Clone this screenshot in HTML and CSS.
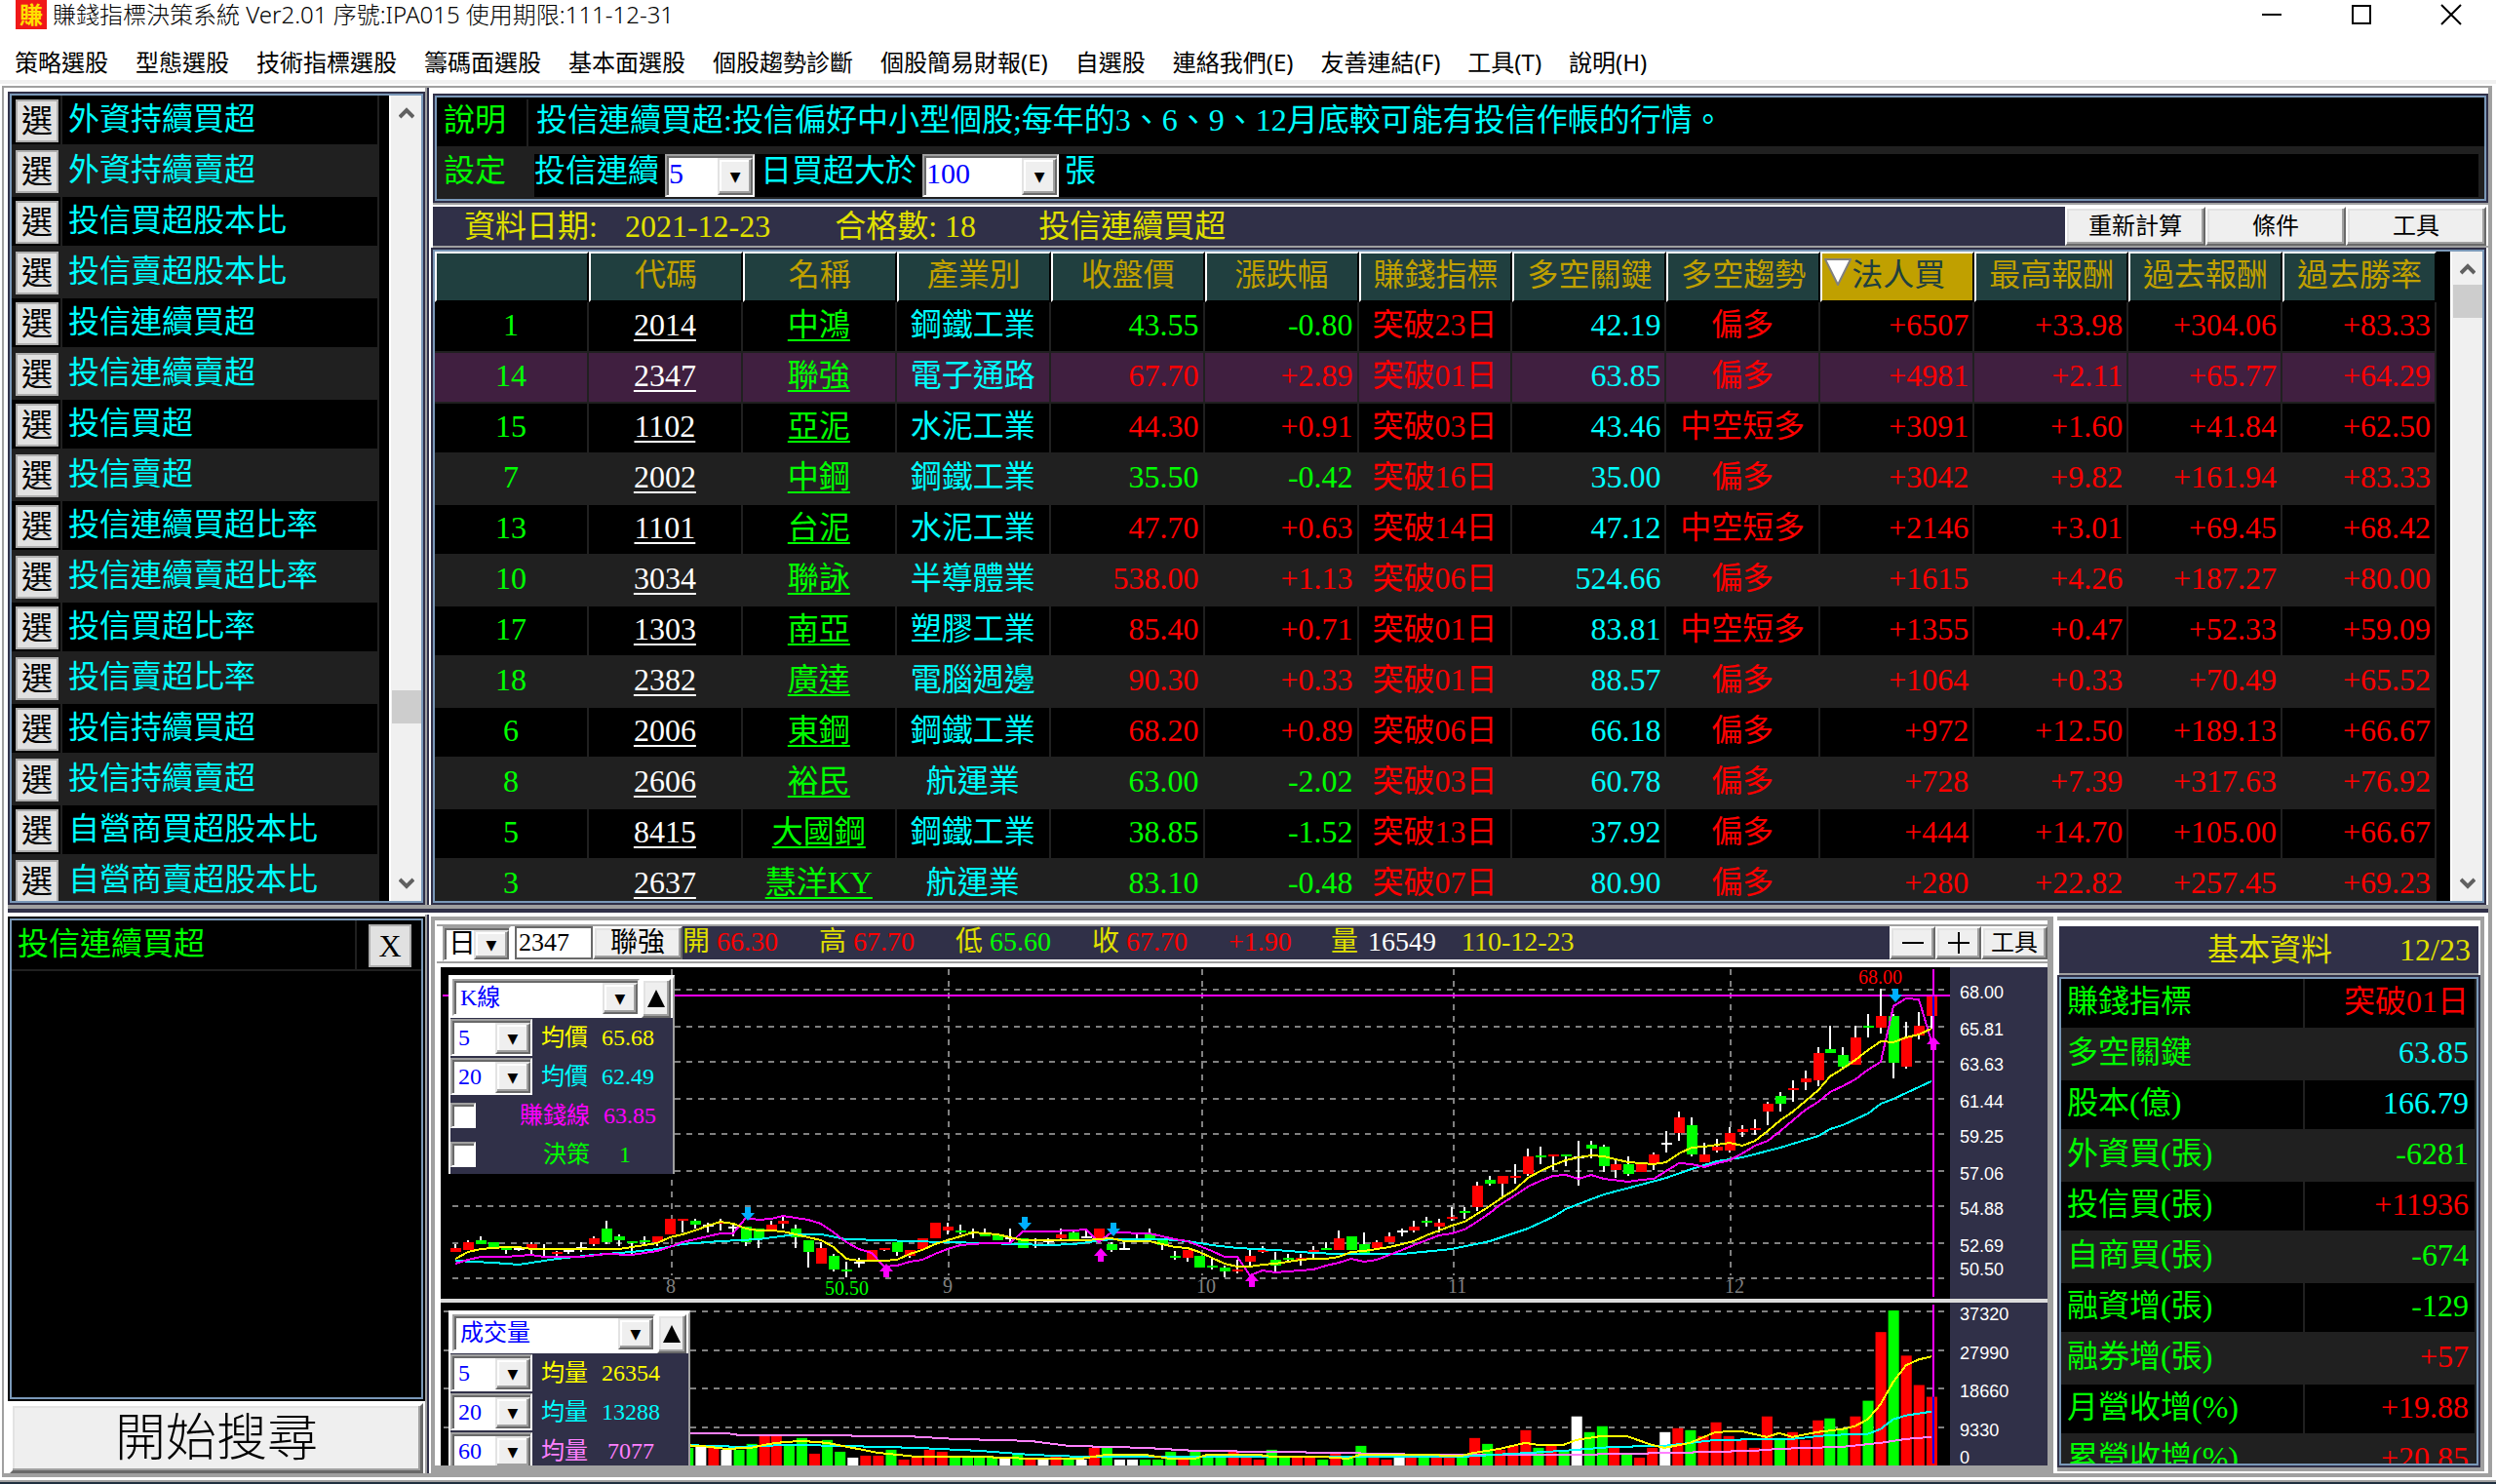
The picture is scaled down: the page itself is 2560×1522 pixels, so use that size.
FILE: index.html
```html
<!DOCTYPE html>
<html lang="zh-Hant">
<head>
<meta charset="utf-8">
<title>賺錢指標決策系統</title>
<link rel="stylesheet" href="styles.css">
</head>
<body>
<header class="titlebar">
  <span class="app-icon" aria-hidden="true">賺</span>
  <h1>賺錢指標決策系統 Ver2.01 序號:IPA015 使用期限:111-12-31</h1>
  <div class="window-buttons">
    <button type="button" aria-label="最小化"><svg width="20" height="20"><path d="M0 10H20"/></svg></button>
    <button type="button" aria-label="最大化"><svg width="20" height="20"><path d="M1 1H19V19H1Z"/></svg></button>
    <button type="button" aria-label="關閉"><svg width="20" height="20"><path d="M0 0L20 20M20 0L0 20"/></svg></button>
  </div>
</header>
<nav class="menu">
  <a href="#">策略選股</a><a href="#">型態選股</a><a href="#">技術指標選股</a><a href="#">籌碼面選股</a><a href="#">基本面選股</a><a href="#">個股趨勢診斷</a><a href="#">個股簡易財報(E)</a><a href="#">自選股</a><a href="#">連絡我們(E)</a><a href="#">友善連結(F)</a><a href="#">工具(T)</a><a href="#">說明(H)</a>
</nav>
<main class="frame">
  <div class="divider"></div>
  <div class="splitter"></div>

  <section class="strategies sunk">
    <ul>
      <li><button type="button">選</button><span>外資持續買超</span></li>
      <li><button type="button">選</button><span>外資持續賣超</span></li>
      <li><button type="button">選</button><span>投信買超股本比</span></li>
      <li><button type="button">選</button><span>投信賣超股本比</span></li>
      <li><button type="button">選</button><span>投信連續買超</span></li>
      <li><button type="button">選</button><span>投信連續賣超</span></li>
      <li><button type="button">選</button><span>投信買超</span></li>
      <li><button type="button">選</button><span>投信賣超</span></li>
      <li><button type="button">選</button><span>投信連續買超比率</span></li>
      <li><button type="button">選</button><span>投信連續賣超比率</span></li>
      <li><button type="button">選</button><span>投信買超比率</span></li>
      <li><button type="button">選</button><span>投信賣超比率</span></li>
      <li><button type="button">選</button><span>投信持續買超</span></li>
      <li><button type="button">選</button><span>投信持續賣超</span></li>
      <li><button type="button">選</button><span>自營商買超股本比</span></li>
      <li><button type="button">選</button><span>自營商賣超股本比</span></li>
    </ul>
    <div class="scroll scroll-low">
      <svg width="16" height="12"><path d="M1 10L8 3L15 10"/></svg>
      <i></i>
      <svg width="16" height="12"><path d="M1 2L8 9L15 2"/></svg>
    </div>
  </section>

  <section class="results">
    <div class="settings sunk">
      <div class="set-row"><b>說明</b><span>投信連續買超:投信偏好中小型個股;每年的3、6、9、12月底較可能有投信作帳的行情。</span></div>
      <div class="set-row alt"><b>設定</b>
        <div class="rule">
          <label for="days">投信連續</label>
          <span class="combo big w92"><select id="days"><option>5</option></select></span>
          <label for="lots">日買超大於</label>
          <span class="combo big w140"><select id="lots"><option>100</option></select></span>
          <span>張</span>
        </div>
      </div>
    </div>
    <div class="summary">
      <div class="summary-text"><span>資料日期:</span><span class="date">2021-12-23</span><span class="count">合格數: 18</span><span>投信連續買超</span></div>
      <button type="button" class="raised">重新計算</button>
      <button type="button" class="raised">條件</button>
      <button type="button" class="raised">工具</button>
    </div>
    <div class="grid-box sunk">
      <div class="grid-view">
        <table class="stocks">
          <thead><tr><th></th><th>代碼</th><th>名稱</th><th>產業別</th><th>收盤價</th><th>漲跌幅</th><th>賺錢指標</th><th>多空關鍵</th><th>多空趨勢</th><th class="sorted"><svg width="28" height="28"><path d="M1 1H27L14 27Z"/></svg>法人買</th><th>最高報酬</th><th>過去報酬</th><th>過去勝率</th></tr></thead>
          <tbody>
            <tr class="down"><td>1</td><td><a href="#">2014</a></td><td><a href="#">中鴻</a></td><td>鋼鐵工業</td><td>43.55</td><td>-0.80</td><td>突破23日</td><td>42.19</td><td>偏多</td><td>+6507</td><td>+33.98</td><td>+304.06</td><td>+83.33</td></tr>
            <tr class="current"><td>14</td><td><a href="#">2347</a></td><td><a href="#">聯強</a></td><td>電子通路</td><td>67.70</td><td>+2.89</td><td>突破01日</td><td>63.85</td><td>偏多</td><td>+4981</td><td>+2.11</td><td>+65.77</td><td>+64.29</td></tr>
            <tr><td>15</td><td><a href="#">1102</a></td><td><a href="#">亞泥</a></td><td>水泥工業</td><td>44.30</td><td>+0.91</td><td>突破03日</td><td>43.46</td><td>中空短多</td><td>+3091</td><td>+1.60</td><td>+41.84</td><td>+62.50</td></tr>
            <tr class="down"><td>7</td><td><a href="#">2002</a></td><td><a href="#">中鋼</a></td><td>鋼鐵工業</td><td>35.50</td><td>-0.42</td><td>突破16日</td><td>35.00</td><td>偏多</td><td>+3042</td><td>+9.82</td><td>+161.94</td><td>+83.33</td></tr>
            <tr><td>13</td><td><a href="#">1101</a></td><td><a href="#">台泥</a></td><td>水泥工業</td><td>47.70</td><td>+0.63</td><td>突破14日</td><td>47.12</td><td>中空短多</td><td>+2146</td><td>+3.01</td><td>+69.45</td><td>+68.42</td></tr>
            <tr><td>10</td><td><a href="#">3034</a></td><td><a href="#">聯詠</a></td><td>半導體業</td><td>538.00</td><td>+1.13</td><td>突破06日</td><td>524.66</td><td>偏多</td><td>+1615</td><td>+4.26</td><td>+187.27</td><td>+80.00</td></tr>
            <tr><td>17</td><td><a href="#">1303</a></td><td><a href="#">南亞</a></td><td>塑膠工業</td><td>85.40</td><td>+0.71</td><td>突破01日</td><td>83.81</td><td>中空短多</td><td>+1355</td><td>+0.47</td><td>+52.33</td><td>+59.09</td></tr>
            <tr><td>18</td><td><a href="#">2382</a></td><td><a href="#">廣達</a></td><td>電腦週邊</td><td>90.30</td><td>+0.33</td><td>突破01日</td><td>88.57</td><td>偏多</td><td>+1064</td><td>+0.33</td><td>+70.49</td><td>+65.52</td></tr>
            <tr><td>6</td><td><a href="#">2006</a></td><td><a href="#">東鋼</a></td><td>鋼鐵工業</td><td>68.20</td><td>+0.89</td><td>突破06日</td><td>66.18</td><td>偏多</td><td>+972</td><td>+12.50</td><td>+189.13</td><td>+66.67</td></tr>
            <tr class="down"><td>8</td><td><a href="#">2606</a></td><td><a href="#">裕民</a></td><td>航運業</td><td>63.00</td><td>-2.02</td><td>突破03日</td><td>60.78</td><td>偏多</td><td>+728</td><td>+7.39</td><td>+317.63</td><td>+76.92</td></tr>
            <tr class="down"><td>5</td><td><a href="#">8415</a></td><td><a href="#">大國鋼</a></td><td>鋼鐵工業</td><td>38.85</td><td>-1.52</td><td>突破13日</td><td>37.92</td><td>偏多</td><td>+444</td><td>+14.70</td><td>+105.00</td><td>+66.67</td></tr>
            <tr class="down"><td>3</td><td><a href="#">2637</a></td><td><a href="#">慧洋KY</a></td><td>航運業</td><td>83.10</td><td>-0.48</td><td>突破07日</td><td>80.90</td><td>偏多</td><td>+280</td><td>+22.82</td><td>+257.45</td><td>+69.23</td></tr>
          </tbody>
        </table>
      </div>
      <div class="scroll">
        <svg width="16" height="12"><path d="M1 10L8 3L15 10"/></svg>
        <i></i>
        <svg width="16" height="12"><path d="M1 2L8 9L15 2"/></svg>
      </div>
    </div>
  </section>

  <section class="chosen">
    <div class="chosen-list sunk">
      <div class="chosen-row"><span>投信連續買超</span><button type="button" aria-label="移除">X</button></div>
    </div>
    <button type="button" class="raised search">開始搜尋</button>
  </section>

  <section class="chart-pane">
    <div class="quote">
      <span class="combo ink w70"><select aria-label="週期"><option>日</option></select></span>
      <input class="code" type="text" value="2347" aria-label="代碼">
      <button type="button" class="raised name">聯強</button>
      <dl>
        <div><dt>開</dt><dd class="r">66.30</dd></div>
        <div><dt>高</dt><dd class="r">67.70</dd></div>
        <div><dt>低</dt><dd class="g">65.60</dd></div>
        <div><dt>收</dt><dd class="r">67.70</dd></div>
        <div class="diff"><dd class="r">+1.90</dd></div>
        <div class="vol"><dt>量</dt><dd class="w">16549</dd></div>
        <div><dd>110-12-23</dd></div>
      </dl>
      <button type="button" class="raised zoom" aria-label="縮小"><svg width="22" height="22"><path d="M0 11H22"/></svg></button>
      <button type="button" class="raised zoom" aria-label="放大"><svg width="22" height="22"><path d="M0 11H22M11 0V22"/></svg></button>
      <button type="button" class="raised tools">工具</button>
    </div>
    <div class="plots">
      <div class="plot">
        <svg id="price" viewBox="0 0 1548 340" preserveAspectRatio="xMaxYMin slice"></svg>
        <div class="legend">
          <div class="legend-top"><span class="combo"><select aria-label="指標"><option>K線</option></select></span><button type="button" class="raised up" aria-label="收合"><svg width="18" height="18"><path d="M9 0L18 18H0Z"/></svg></button></div>
          <div class="legend-row y"><span class="combo w84"><select aria-label="均價一"><option>5</option></select></span><span>均價</span><span>65.68</span></div>
          <div class="legend-row c"><span class="combo w84"><select aria-label="均價二"><option>20</option></select></span><span>均價</span><span>62.49</span></div>
          <div class="legend-row m"><input type="checkbox" id="ck1"><label for="ck1">賺錢線</label><span>63.85</span></div>
          <div class="legend-row g"><input type="checkbox" id="ck2"><label for="ck2">決策</label><span class="one">1</span></div>
        </div>
      </div>
      <svg class="axis" id="price-axis" viewBox="0 0 100 340" preserveAspectRatio="xMinYMin slice"></svg>
      <div class="plot">
        <svg id="volume" viewBox="0 0 1548 166" preserveAspectRatio="xMaxYMax slice"></svg>
        <div class="legend wide">
          <div class="legend-top"><span class="combo"><select aria-label="指標"><option>成交量</option></select></span><button type="button" class="raised up" aria-label="收合"><svg width="18" height="18"><path d="M9 0L18 18H0Z"/></svg></button></div>
          <div class="legend-row y"><span class="combo w84"><select aria-label="均量一"><option>5</option></select></span><span>均量</span><span>26354</span></div>
          <div class="legend-row c"><span class="combo w84"><select aria-label="均量二"><option>20</option></select></span><span>均量</span><span>13288</span></div>
          <div class="legend-row p"><span class="combo w84"><select aria-label="均量三"><option>60</option></select></span><span>均量</span><span>&nbsp;7077</span></div>
        </div>
      </div>
      <svg class="axis" id="volume-axis" viewBox="0 0 100 166" preserveAspectRatio="xMinYMin slice"></svg>
    </div>
  </section>

  <section class="facts">
    <header><h2>基本資料</h2><span>12/23</span></header>
    <div class="facts-box sunk">
      <table>
        <tr><th scope="row">賺錢指標</th><td class="r">突破01日</td></tr>
        <tr><th scope="row">多空關鍵</th><td class="c">63.85</td></tr>
        <tr><th scope="row">股本(億)</th><td class="c">166.79</td></tr>
        <tr><th scope="row">外資買(張)</th><td class="g">-6281</td></tr>
        <tr><th scope="row">投信買(張)</th><td class="r">+11936</td></tr>
        <tr><th scope="row">自商買(張)</th><td class="g">-674</td></tr>
        <tr><th scope="row">融資增(張)</th><td class="g">-129</td></tr>
        <tr><th scope="row">融券增(張)</th><td class="r">+57</td></tr>
        <tr><th scope="row">月營收增(%)</th><td class="r">+19.88</td></tr>
        <tr><th scope="row">累營收增(%)</th><td class="r">+20.85</td></tr>
      </table>
    </div>
  </section>
</main>
<footer class="edge"></footer>
<script src="chart.js"></script>
</body>
</html>
```
FILE: styles.css
```css
* { box-sizing: border-box; }
:root {
  --navy: #303048;
  --gray: #a0a0a0;
  --blue: #7a98b8;
  --stripe: #202020;
  --ming: "Liberation Serif", "Noto Sans CJK TC", serif;
  --ui: "Noto Sans", "Noto Sans CJK TC", sans-serif;
}
body {
  margin: 0;
  height: 100vh;
  display: flex;
  flex-direction: column;
  overflow: hidden;
  background: #fff;
  color: #000;
  font: 400 32px/40px var(--ming);
}
h1, h2, ul, dl, dd { margin: 0; padding: 0; font: inherit; }
ul { list-style: none; }
button, select, input { font: inherit; color: inherit; margin: 0; padding: 0; border-radius: 0; }
table { border-spacing: 0; table-layout: fixed; width: 100%; }
b, th { font-weight: inherit; }

.r { color: #f00; }
.g { color: #0f0; }
.c { color: #0ff; }
.w { color: #fff; }
.y { color: #ff0; }
.m { color: #f0f; }
.p { color: #ff80ff; }

/* title and menu */
.titlebar { display: flex; align-items: center; height: 30px; padding-left: 16px; font: 300 24px/30px var(--ui); flex: none; }
.app-icon { width: 32px; height: 30px; background: #f01818; color: #ffe000; text-align: center; font-weight: 700; }
.titlebar h1 { margin-left: 6px; flex: 1; }
.window-buttons { display: flex; }
.window-buttons button { width: 92px; height: 30px; border: 0; background: none; display: grid; place-items: center; }
.window-buttons svg { overflow: visible; fill: none; stroke: #000; stroke-width: 2; }
.menu { display: flex; gap: 28px; height: 56px; padding: 18px 0 0 15px; border-bottom: 4px solid #f0f0f0; font: 24px/32px var(--ui); flex: none; }
.menu a { color: #000; text-decoration: none; white-space: nowrap; }

/* frame */
.frame {
  flex: 1;
  min-height: 0;
  margin: 2px 4px 0 2px;
  padding-left: 4px;
  border: solid var(--gray);
  border-width: 2px 4px 4px 2px;
  display: grid;
  grid-template-columns: 428px 8px minmax(0, 1fr) 446px;
  grid-template-rows: minmax(0, 838fr) 10px minmax(0, 573fr);
  grid-template-areas: "list . main main" "split split split split" "pick . chart facts";
}
.divider { grid-row: 1 / 4; grid-column: 2; width: 4px; border-left: 2px solid var(--gray); border-right: 2px solid var(--navy); }
.splitter { grid-area: split; background: linear-gradient(var(--gray) 4px, var(--navy) 4px, var(--navy) 8px, #fff 8px); }
.sunk { background: #000; border: 2px solid var(--blue); box-shadow: 0 0 0 2px var(--navy); overflow: hidden; }

.raised {
  background: #efefef;
  border: 2px solid;
  border-color: #fff #696969 #696969 #fff;
  box-shadow: inset -2px -2px 0 var(--gray), inset 2px 2px 0 #e3e3e3;
}

.combo { position: relative; display: block; height: 38px; background: #fff; border: 2px solid; border-color: var(--gray) #fff #fff var(--gray); box-shadow: inset 2px 2px 0 #696969; }
.combo select { appearance: none; display: block; width: 100%; height: 100%; border: 0; background: none; padding-left: 6px; color: #00f; font-size: 24px; line-height: 32px; }
.combo::after {
  content: "▼";
  position: absolute;
  top: 2px; right: 0; bottom: 0;
  width: 32px;
  display: grid;
  place-items: center;
  font: 14px/14px "DejaVu Sans", sans-serif;
  color: #000;
  background: #efefef;
  border: 2px solid;
  border-color: #e3e3e3 #696969 #696969 #e3e3e3;
  box-shadow: inset -2px -2px 0 var(--gray), inset 2px 2px 0 #fff;
  pointer-events: none;
}
.combo.big { height: 44px; }
.combo.big select { font-size: 30px; line-height: 36px; padding: 0 0 4px 2px; }
.combo.ink { height: 36px; }
.combo.ink select { color: #000; font-size: 28px; padding-left: 4px; }
.w70 { width: 70px; }
.w84 { width: 84px; }
.w92 { width: 92px; }
.w140 { width: 140px; }

.scroll { width: 33px; background: #f0f0f0; border-left: 2px solid #fff; display: flex; flex-direction: column; align-items: center; padding: 12px 0; flex: none; }
.scroll svg { fill: none; stroke: #606060; stroke-width: 4; flex: none; }
.scroll i { width: 30px; height: 34px; background: #cdcdcd; margin: 10px 0 auto; }
.scroll-low i { margin: auto 0 158px; }

/* strategy list */
.strategies { grid-area: list; margin: 6px 2px 2px; display: flex; }
.strategies ul { flex: 1; margin-right: 10px; overflow: hidden; }
.strategies li { display: flex; height: 52px; padding-left: 4px; background: #000; border: solid var(--stripe); border-width: 0 2px 2px 0; }
.strategies li:nth-child(even) { background: var(--stripe); }
.strategies li span { flex: 1; margin-left: 2px; padding: 4px 0 0 6px; border-left: 2px solid var(--stripe); color: #0ff; }
.strategies button, .chosen button:not(.raised) { width: 44px; height: 44px; margin-top: 4px; background: #e1e1e1; border: 2px solid #adadad; line-height: 36px; flex: none; }

/* results */
.results { grid-area: main; margin: 0 0 2px; display: flex; flex-direction: column; min-height: 0; }
.settings { margin: 8px 2px 0; height: 108px; flex: none; }
.set-row { display: flex; height: 52px; border-bottom: 2px solid var(--stripe); color: #0ff; line-height: 42px; padding-top: 2px; }
.set-row b { width: 94px; padding-left: 7px; color: #0f0; border-right: 2px solid var(--stripe); flex: none; }
.set-row > span { padding-left: 8px; white-space: nowrap; }
.set-row.alt { background: var(--stripe); }
.rule { flex: 1; display: flex; gap: 6px; height: 44px; margin: 4px 6px 0; background: #000; line-height: 34px; }
.summary { display: flex; margin-top: 2px; padding-top: 2px; height: 46px; border: solid var(--gray); border-width: 2px 0; flex: none; }
.summary-text { flex: 1; display: flex; padding-left: 32px; background: var(--navy); color: #e0e000; }
.summary-text .date { margin: 0 66px 0 28px; }
.summary-text .count { margin-right: 64px; }
.summary .raised { width: 144px; padding-bottom: 4px; font: 24px/30px "Noto Sans CJK TC", sans-serif; }
.summary .raised:last-child { margin-right: 2px; }
.grid-box { flex: 1; margin: 2px 4px 0 0; display: flex; min-height: 0; }
.grid-view { flex: 1; overflow: hidden; padding-right: 14px; }
.stocks th, .stocks td { height: 52px; padding: 0 0 4px; white-space: nowrap; text-align: center; line-height: 40px; }
.stocks th { background: #203f3f; color: #c0a000; border: 2px solid #000; border-color: #fff #000 #000 #fff; }
.stocks th.sorted { background: #c0a000; color: #203f3f; padding-right: 26px; }
.stocks th svg { fill: #fff; stroke: #808080; stroke-width: 2; }
.stocks td { border: solid var(--stripe); border-width: 0 2px 2px 0; color: #f00; background: #000; }
.stocks tr:nth-child(even) td { background: var(--stripe); }
.stocks tr.current td { background: #401f40; }
.stocks a { color: inherit; text-decoration: underline 2px; text-underline-offset: 4px; }
.stocks td:nth-child(1), .stocks td:nth-child(3) { color: #0f0; }
.stocks td:nth-child(2) { color: #fff; }
.stocks td:nth-child(4), .stocks td:nth-child(8) { color: #0ff; }
.stocks .down td:nth-child(5), .stocks .down td:nth-child(6) { color: #0f0; }
.stocks td:nth-child(5), .stocks td:nth-child(6), .stocks td:nth-child(8), .stocks td:nth-child(n+10) { text-align: right; padding-right: 4px; }

/* chosen strategies */
.chosen { grid-area: pick; display: flex; flex-direction: column; padding: 4px 2px 0; min-height: 0; }
.chosen-list { flex: 1; box-shadow: 0 0 0 2px #000; }
.chosen-row { display: flex; height: 52px; border-bottom: 2px solid var(--stripe); color: #0f0; }
.chosen-row span { flex: 1; padding: 4px 0 0 6px; }
.chosen-row::before { content: ""; order: 1; width: 12px; border-left: 2px solid var(--stripe); }
.chosen-row button { order: 2; color: #000; margin-right: 10px; }
.chosen .search { height: 72px; margin-top: 4px; padding-bottom: 8px; font: 300 52px/56px "Noto Sans CJK TC", sans-serif; border-width: 3px; }

/* chart */
.chart-pane { grid-area: chart; margin: 2px 0 0 -2px; padding-top: 4px; border: solid var(--gray); border-width: 4px 6px 8px 4px; display: flex; flex-direction: column; min-height: 0; }
.quote { display: flex; height: 40px; margin-left: 2px; padding-left: 6px; border-top: 2px solid var(--gray); border-bottom: 2px solid var(--gray); flex: none; font-size: 28px; line-height: 32px; }
.quote .code { width: 80px; height: 34px; margin-left: 4px; padding: 0 2px; font-size: 26px; border: 2px solid #696969; background: #fff; }
.quote .name { width: 92px; height: 34px; line-height: 28px; }
.quote dl { display: flex; flex: 1; height: 34px; background: var(--navy); color: #e0e000; overflow: hidden; }
.quote dl div { display: flex; gap: 7px; width: 140px; white-space: nowrap; }
.quote dl div.diff { width: 105px; }
.quote dl div.vol { width: 134px; gap: 10px; }
.zoom { width: 47px; height: 34px; display: grid; place-items: center; }
.zoom svg { stroke: #000; stroke-width: 2; }
.tools { width: 68px; height: 34px; font-size: 24px; line-height: 28px; }
.plots { flex: 1; min-height: 0; margin: 4px 0 0 6px; display: grid; grid-template-columns: minmax(0, 1fr) 100px; grid-template-rows: minmax(0, 340fr) minmax(0, 167fr); row-gap: 4px; background: #dcdcdc; }
.plot { position: relative; background: #000; overflow: hidden; }
.plot > svg, .axis { display: block; width: 100%; height: 100%; }
.plot text { font: 20px "Liberation Serif", serif; }
.axis { background: var(--navy); }
.axis text { font: 18px "Liberation Sans", sans-serif; fill: #fff; }
.legend { position: absolute; left: 8px; top: 8px; width: 232px; background: var(--navy); border: solid #fff; border-width: 4px 0 0 2px; border-right: 2px solid var(--gray); font-size: 24px; }
.legend.wide { width: 248px; }
.legend-top { display: flex; gap: 2px; padding: 0 2px; background: #fff; height: 40px; }
.legend-top .combo { flex: 1; }
.legend .up { width: 30px; height: 40px; display: grid; place-items: center; }
.legend-row { display: flex; align-items: center; height: 40px; gap: 14px; line-height: 36px; }
.legend-row .combo + span { margin-left: -5px; }
.legend-row input { appearance: none; width: 26px; height: 26px; background: #fff; border: 2px solid; border-color: var(--gray) #fff #fff var(--gray); box-shadow: inset 2px 2px 0 #696969; }
.legend-row label { width: 103px; text-align: right; }
.legend-row .one { margin-left: 16px; }

/* basic facts */
.facts { grid-area: facts; margin: 2px 4px 2px 4px; padding: 6px 2px 0 2px; border: solid var(--gray); border-width: 4px 4px 4px 0; display: flex; flex-direction: column; min-height: 0; }
.facts header { display: flex; height: 50px; background: var(--navy); border-bottom: 2px solid var(--gray); color: #e0e000; padding: 4px 8px 0 152px; flex: none; }
.facts h2 { margin-right: auto; }
.facts-box { flex: 1; min-height: 0; margin: 2px 0; }
.facts th, .facts td { height: 52px; padding: 0 6px 4px; border: solid var(--stripe); border-width: 0 2px 2px 0; background: #000; white-space: nowrap; }
.facts th { width: 250px; text-align: left; color: #0f0; }
.facts td { text-align: right; }
.facts tr:nth-child(even) > * { background: var(--stripe); }

.edge { height: 7px; flex: none; background: linear-gradient(#fff 3px, var(--gray) 3px, var(--gray) 5px, #203040 5px); }
```
FILE: chart.js
```js
// Levels are chart units counted downwards: 225 is 68.00 and 1009 is 50.50.
const X = i => Math.round(15 + 12.94 * i);
const Y1 = v => Math.round((v - 164) / 2.649);
const Y2 = v => Math.round((v - 1075) / 2.649);
const FILL = { R: '#f00', G: '#0f0', W: '#fff' };

// colour, body top, body bottom, wick top, wick bottom
const candles = `R 927 937 917 937|R 911 932 906 932|G 906 916 895 916|G 911 927 911 927|G 927 930 927 942|W 928 932 927 935|R 916 927 911 942|W 928 932 916 948|R 938 942 935 948|W 932 936 929 942|W 925 929 911 938|R 901 916 895 922|G 874 911 853 916|G 895 906 890 922|G 909 914 909 942|G 906 911 895 916|R 895 911 895 922|R 848 890 848 890|R 848 852 848 885|G 853 863 848 874|W 864 868 858 885|R 855 860 848 879|W 869 873 858 895|G 869 911 869 922|G 874 901 874 927|R 863 879 853 879|R 853 860 842 874|G 874 898 863 927|G 906 938 906 980|R 927 969 911 969|G 948 986 943 990|G 986 990 964 1006|W 964 968 953 980|R 932 958 932 958|R 928 932 928 935|G 911 938 911 948|R 932 948 932 953|R 901 930 901 930|R 858 901 858 901|R 869 879 858 890|G 879 884 863 890|G 881 885 874 900|G 884 895 874 895|G 893 906 890 906|W 898 902 874 916|G 900 927 900 927|R 902 906 900 927|W 906 910 901 916|R 890 901 874 906|G 885 906 880 906|W 895 900 880 900|R 874 901 874 901|G 916 932 911 937|W 927 931 906 931|W 904 908 890 906|G 890 906 874 906|G 902 918 900 932|G 948 952 935 958|R 932 953 932 964|G 948 980 948 980|G 975 979 953 984|G 980 990 975 1006|R 985 990 959 995|R 948 963 932 975|R 932 936 922 940|G 959 975 938 990|G 954 959 943 963|R 953 957 943 975|R 933 938 922 953|G 927 931 911 931|R 901 932 879 932|G 895 932 895 932|G 916 942 885 942|R 911 927 906 930|R 895 911 885 911|W 880 884 874 895|R 869 879 853 885|G 854 858 842 868|R 858 868 848 885|R 842 848 816 853|G 826 831 816 848|R 758 816 747 826|G 742 752 731 757|R 731 752 731 790|R 731 735 700 752|R 678 725 657 731|G 674 678 652 698|R 673 677 677 714|G 673 677 677 704|W 679 682 636 757|G 646 657 636 682|G 652 705 646 720|R 699 714 688 736|G 699 725 678 730|R 699 720 699 720|R 673 699 667 714|W 642 646 609 667|R 572 614 556 636|G 593 672 572 678|R 673 694 642 694|R 652 662 630 667|R 614 662 599 667|R 604 613 593 624|R 600 604 577 620|R 535 556 530 593|G 514 535 503 556|R 493 497 471 530|R 466 476 445 498|R 397 471 381 487|G 387 397 323 397|G 403 434 381 440|R 355 429 323 429|G 324 328 291 355|R 297 328 222 344|G 297 424 291 466|R 355 434 313 440|R 323 350 286 360|R 244 297 244 330`
  .split('|').map(r => r.split(' '));

// volume tops, starting with the 20th session; colours follow the candles
const volumes = [1467,1463,1460,1472,1472,1457,1436,1436,1462,1441,1483,1446,1478,1494,1489,1489,1473,1499,1494,1473,1478,1494,1494,1494,1494,1494,1485,1495,1499,1489,1494,1499,1467,1467,1499,1499,1499,1499,1478,1494,1476,1490,1494,1478,1494,1499,1473,1494,1494,1494,1499,1484,1494,1462,1494,1499,1494,1494,1489,1494,1494,1489,1441,1457,1472,1462,1420,1467,1462,1476,1383,1425,1409,1467,1483,1494,1467,1425,1414,1420,1436,1398,1436,1446,1467,1383,1441,1425,1446,1393,1388,1415,1383,1340,1155,1097,1218,1298,1330];

const priceLines = {
  '#0ff': '0:962 3:966 5:971 8:957 11:946 14:937 16:929 18:917 21:909 24:902 27:890 29:891 31:903 34:905 36:909 42:913 47:919 49:916 52:904 56:903 58:908 60:918 62:928 65:932 68:941 70:944 75:944 79:930 82:908 85:875 87:842 88:820 91:782 94:754 96:735 98:712 100:692 102:680 105:655 108:622 109:603 110:592 112:562 113:535 114:522 117:473',
  '#f0f': '0:970 1:958 2:951 4:950 6:945 7:950 10:950 12:943 14:945 16:935 17:925 18:911 20:895 21:888 22:888 23:845 24:850 25:848 26:840 27:845 28:850 29:860 30:885 31:912 32:930 33:940 34:978 35:975 36:965 37:958 38:943 39:930 40:918 42:914 44:914 45:881 47:883 49:880 50:876 51:912 52:885 55:887 57:902 58:908 60:935 61:950 62:952 63:1000 64:988 65:993 68:985 69:975 70:966 71:956 72:965 73:960 74:945 75:932 76:920 77:905 78:892 79:887 80:876 81:856 82:832 83:805 84:785 85:760 86:743 87:732 88:727 89:738 90:727 91:740 93:748 94:742 95:740 96:718 97:696 98:700 99:706 100:696 101:688 102:670 103:650 104:635 105:608 106:580 107:552 108:530 109:503 110:488 111:468 112:443 113:420 114:270 115:250 116:252 117:365',
  '#ff0': '0:957 1:938 2:930 4:924 5:924 6:929 13:929 14:925 15:919 16:913 17:898 18:890 19:880 20:866 21:856 22:862 23:875 24:879 25:880 26:881 27:890 28:898 29:905 30:925 31:955 32:962 33:962 34:961 35:958 36:943 37:932 38:917 39:906 40:895 41:885 42:886 43:890 44:898 45:905 46:907 50:907 51:902 52:900 53:908 55:908 56:915 57:925 58:926 59:938 60:953 61:970 62:976 63:977 64:972 65:969 66:964 67:960 68:957 69:955 70:950 71:937 72:934 73:930 74:924 75:916 76:908 77:892 78:880 79:867 80:855 81:835 82:812 83:788 84:768 85:736 86:718 87:702 88:689 89:680 90:676 91:679 92:685 93:694 94:696 95:698 96:693 97:670 98:655 99:651 100:645 101:640 102:648 103:635 104:610 105:580 106:556 107:528 108:497 109:462 110:440 111:415 112:388 113:366 114:368 115:355 116:348 117:332'
};
const volumeLines = {
  '#ff80ff': '17:1427 22:1427 23:1432 36:1434 40:1443 46:1448 49:1462 55:1467 59:1475 70:1480 77:1485 89:1485 97:1480 103:1475 105:1469 110:1464 113:1454 115:1444 117:1437',
  '#0ff': '18:1458 21:1461 23:1465 27:1460 31:1463 37:1468 42:1475 46:1485 50:1491 80:1491 84:1482 88:1475 92:1465 96:1463 100:1447 106:1442 109:1432 112:1430 113:1418 114:1390 115:1380 117:1368',
  '#ff0': '18:1458 20:1461 22:1469 24:1467 25:1458 26:1453 28:1449 30:1453 32:1468 34:1480 37:1491 42:1490 46:1495 50:1496 52:1486 55:1486 57:1496 59:1495 60:1486 64:1486 65:1491 69:1491 71:1496 72:1486 76:1486 80:1489 81:1480 83:1470 85:1453 86:1459 88:1459 89:1445 91:1435 93:1434 95:1458 96:1468 98:1453 100:1424 102:1422 104:1438 105:1428 106:1438 108:1424 110:1416 111:1408 112:1390 113:1350 114:1290 115:1245 116:1228 117:1220'
};

const line = (x1, y1, x2, y2, color, extra = '') =>
  `<path d="M${x1} ${y1}L${x2} ${y2}" stroke="${color}" stroke-width="2" ${extra}/>`;
const dash = 'stroke-dasharray="6 6" shape-rendering="crispEdges"';
const box = (x, y, w, h, fill) => `<rect x="${x}" y="${y}" width="${w}" height="${h}" fill="${fill}"/>`;
const curves = (set, y) => Object.entries(set).map(([color, pts]) =>
  `<polyline fill="none" shape-rendering="crispEdges" stroke="${color}" stroke-width="2" points="${pts.split(' ').map(p => {
    const [i, v] = p.split(':');
    return X(i) + ',' + y(v);
  }).join(' ')}"/>`).join('');
const label = (x, y, text, fill) => `<text x="${x}" y="${y}" fill="${fill}">${text}</text>`;
const downArrow = (x, y) => `<path d="M${x - 3} ${y}h6v6h4l-7 8l-7 -8h4z" fill="#00b0ff"/>`;
const upArrow = (x, y) => `<path d="M${x - 3} ${y + 14}h6v-6h4l-7 -8l-7 8h4z" fill="#f0f"/>`;

let out = '';
for (const v of [225, 325, 421, 521, 617, 717, 813, 913, 1009]) out += line(12, Y1(v), 1548, Y1(v), '#808080', dash);
for (const [x, m] of [[237, 8], [521, 9], [781, 10], [1039, 11], [1323, 12]]) {
  out += line(x, 2, x, 316, '#808080', dash) + label(x - 6, 334, m, '#808080');
}
out += line(2, 29, 1548, 29, '#f0f');
candles.forEach(([c, t, b, h, l], i) => {
  out += box(X(i) - 1, Y1(h), 2, Math.max(Y1(l) - Y1(h), 2), '#fff');
  out += box(X(i) - 5, Y1(t), 11, Math.max(Y1(b) - Y1(t), 2), FILL[c]);
});
out += curves(priceLines, Y1);
for (const [i, v] of [[23, 815], [45, 843], [52, 858], [114, 222]]) out += downArrow(X(i) + 2, Y1(v));
for (const [i, v] of [[34, 968], [51, 927], [63, 995], [117, 352]]) out += upArrow(X(i) + 2, Y1(v));
out += line(1531, 2, 1531, 338, '#f0f') + line(1531, 30, 1531, 50, '#00f');
out += label(394, 336, '50.50', '#0f0') + label(1454, 17, '68.00', '#f00');
document.getElementById('price').innerHTML = out;

out = '';
for (const v of [1099, 1205, 1305, 1411]) out += line(12, Y2(v), 1548, Y2(v), '#808080', dash);
volumes.forEach((v, k) => {
  const i = k + 19;
  out += box(X(i) - 5, Y2(v), 11, 166 - Y2(v), FILL[candles[i][0]]);
});
out += curves(volumeLines, Y2) + line(1531, 2, 1531, 164, '#f0f') + line(1531, 96, 1531, 164, '#00f');
document.getElementById('volume').innerHTML = out;

const axis = (id, rows, y) => {
  document.getElementById(id).innerHTML = rows.map(([v, t]) => `<text x="10" y="${y(v) + 6}">${t}</text>`).join('');
};
axis('price-axis', [[234, '68.00'], [334, '65.81'], [430, '63.63'], [530, '61.44'], [626, '59.25'], [726, '57.06'], [822, '54.88'], [922, '52.69'], [986, '50.50']], Y1);
axis('volume-axis', [[1108, '37320'], [1214, '27990'], [1314, '18660'], [1420, '9330'], [1494, '0']], Y2);
```
